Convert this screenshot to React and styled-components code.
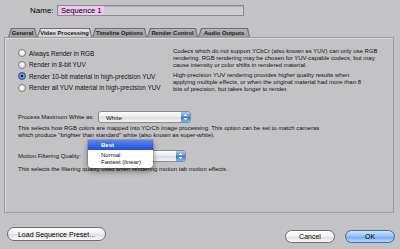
import React from "react"
import styled, { createGlobalStyle } from "styled-components"

const GlobalStyle = createGlobalStyle`
    html, body {
        margin: 0;
        padding: 0;
        background: #c3c3c5;
    }
    body {
        font-family: "Liberation Sans", Arial, sans-serif;
        color: #111;
    }
`

const tabs = ["General", "Video Processing", "Timeline Options", "Render Control", "Audio Outputs"]
const tabWidths = [29, 55, 55, 51, 52]

const radios = [
    "Always Render in RGB",
    "Render in 8-bit YUV",
    "Render 10-bit material in high-precision YUV",
    "Render all YUV material in high-precision YUV",
]

const infoLines = [
    [
        "Codecs which do not support YCbCr (also known as YUV) can only use RGB",
        "rendering. RGB rendering may be chosen for YUV-capable codecs, but may",
        "cause intensity or color shifts in rendered material.",
    ],
    [
        "High-precision YUV rendering provides higher quality results when",
        "applying multiple effects, or when the original material had more than 8",
        "bits of precision, but takes longer to render.",
    ],
]

const UpDown = () => (
    <svg width="5" height="8" viewBox="0 0 5 8">
        <path d="M0.5 3 L2.5 0.8 L4.5 3 Z M0.5 5 L2.5 7.2 L4.5 5 Z" fill="#fff" />
    </svg>
)

const App = () => {
    return (
        <Window>
            <GlobalStyle />
            <NameRow>
                <NameLabel>Name:</NameLabel>
                <NameField>
                    <Selected>Sequence 1</Selected>
                </NameField>
            </NameRow>
            <TabRow>
                {tabs.map((t, i) => (
                    <TabOuter key={t} $w={tabWidths[i]}>
                        <TabInner $active={i === 1}>{t}</TabInner>
                    </TabOuter>
                ))}
            </TabRow>
            <Panel>
                <TopSection>
                    <RadioList>
                        {radios.map((r, i) => (
                            <RadioRow key={r}>
                                <Radio $on={i === 2} />
                                <span>{r}</span>
                            </RadioRow>
                        ))}
                    </RadioList>
                    <InfoText>
                        {infoLines.map((para, i) => (
                            <p key={i}>
                                {para.map((l) => (
                                    <span key={l}>{l}</span>
                                ))}
                            </p>
                        ))}
                    </InfoText>
                </TopSection>
                <PopupRow $top={15}>
                    <FieldLabel>Process Maximum White as:</FieldLabel>
                    <Popup $w={93}>
                        <span>White</span>
                        <Arrows>
                            <UpDown />
                        </Arrows>
                    </Popup>
                </PopupRow>
                <Description>
                    <span>This selects how RGB colors are mapped into YCrCb image processing. This option can be set to match cameras</span>
                    <span>which produce "brighter than standard" white (also known as super-white).</span>
                </Description>
                <PopupRow $top={11}>
                    <FieldLabel>Motion Filtering Quality:</FieldLabel>
                    <Popup $w={88}>
                        <span></span>
                        <Arrows>
                            <UpDown />
                        </Arrows>
                        <Menu>
                            <MenuItem $active>Best</MenuItem>
                            <MenuItem>Normal</MenuItem>
                            <MenuItem>Fastest (linear)</MenuItem>
                        </Menu>
                    </Popup>
                </PopupRow>
                <Description $top={4}>
                    <span>This selects the filtering quality used when rendering motion tab motion effects.</span>
                </Description>
            </Panel>
            <Footer>
                <PillButton $w={99} $h={14} $lift={8}>Load Sequence Preset...</PillButton>
                <ButtonGroup>
                    <PillButton $w={50}>Cancel</PillButton>
                    <PillButton $w={50} $primary>OK</PillButton>
                </ButtonGroup>
            </Footer>
        </Window>
    )
}

const Window = styled.div`
    width: 400px;
    height: 249px;
    overflow: hidden;
    display: flex;
    flex-direction: column;
    background: #c3c3c5;
`
const NameRow = styled.div`
    display: flex;
    align-items: center;
    margin-top: 5px;
    padding-left: 30px;
    height: 11px;
`
const NameLabel = styled.span`
    font-size: 8px;
    width: 27px;
    color: #000;
`
const NameField = styled.div`
    width: 184px;
    height: 9px;
    border: 1px solid #8c8c8e;
    background: #cfcfd1;
    box-shadow: inset 0 1px 1px rgba(0, 0, 0, 0.15);
    display: flex;
    align-items: center;
    padding-left: 1px;
`
const Selected = styled.span`
    background: #efc6f0;
    font-size: 7.6px;
    line-height: 9px;
    padding: 0 2px;
    white-space: nowrap;
    color: #000;
`
const TabRow = styled.div`
    display: flex;
    margin-top: 12px;
    padding-left: 8px;
    height: 9px;
    gap: 1px;
`
const TabOuter = styled.div`
    width: ${(p) => p.$w}px;
    height: 9px;
    background: #707072;
    clip-path: polygon(3px 0, calc(100% - 2px) 0, 100% 100%, 0 100%);
    padding: 1px 1px 0 1px;
    box-sizing: border-box;
    margin-right: -1px;
`
const TabInner = styled.div`
    height: 100%;
    background: ${(p) =>
        p.$active ? "linear-gradient(#e2e2e4, #cdcdcf)" : "linear-gradient(#b4b4b6, #9d9d9f)"};
    clip-path: polygon(3px 0, calc(100% - 2px) 0, 100% 100%, 0 100%);
    font-size: 5.8px;
    font-weight: bold;
    color: #1a1a1a;
    display: flex;
    align-items: center;
    justify-content: center;
    white-space: nowrap;
`
const Panel = styled.div`
    margin-left: 4px;
    width: 390px;
    height: 176px;
    box-sizing: border-box;
    border: 1px solid #9c9c9e;
    box-shadow: inset 1px 1px 0 #d8d8da;
    display: flex;
    flex-direction: column;
    padding-left: 13px;
`
const TopSection = styled.div`
    display: flex;
    margin-top: 11px;
`
const RadioList = styled.div`
    display: flex;
    flex-direction: column;
    gap: 3.5px;
    width: 155px;
`
const RadioRow = styled.div`
    display: flex;
    align-items: center;
    gap: 3px;
    height: 8px;
    font-size: 6.4px;
    white-space: nowrap;
`
const Radio = styled.span`
    width: 8px;
    height: 8px;
    box-sizing: border-box;
    border-radius: 50%;
    border: 1px solid ${(p) => (p.$on ? "#2b4e8c" : "#7a7a7c")};
    background: ${(p) =>
        p.$on
            ? "radial-gradient(circle, #111 0 1.3px, #6fa3e6 1.6px, #3c72c8 100%)"
            : "radial-gradient(circle at 50% 35%, #ffffff, #dadadc)"};
    flex-shrink: 0;
`
const InfoText = styled.div`
    font-size: 6px;
    line-height: 7px;
    margin-top: -1px;
    white-space: nowrap;
    p {
        margin: 0 0 3px 0;
    }
    span {
        display: block;
    }
`
const PopupRow = styled.div`
    display: flex;
    align-items: center;
    margin-top: ${(p) => p.$top}px;
    height: 12px;
`
const FieldLabel = styled.span`
    font-size: 6px;
    width: 80px;
    white-space: nowrap;
`
const Popup = styled.div`
    position: relative;
    width: ${(p) => p.$w}px;
    height: 12px;
    box-sizing: border-box;
    border: 1px solid #8a8a8c;
    border-radius: 3px;
    background: linear-gradient(#ffffff, #e9e9eb 50%, #dcdcde 51%, #f4f4f6);
    display: flex;
    align-items: center;
    justify-content: space-between;
    font-size: 6.2px;
    padding-left: 7px;
`
const Arrows = styled.span`
    width: 9px;
    height: 10px;
    border-radius: 0 2px 2px 0;
    background: linear-gradient(#a9cdf5, #4c8fe0 50%, #2f75d6 51%, #7fb6ef);
    display: flex;
    align-items: center;
    justify-content: center;
`
const Menu = styled.div`
    position: absolute;
    left: -11px;
    top: -11px;
    width: 65px;
    padding: 0 0 2px;
    background: #ffffff;
    border-radius: 0 0 4px 4px;
    box-shadow: 0 3px 6px rgba(0, 0, 0, 0.45), 0 0 0 0.5px rgba(0, 0, 0, 0.25);
    display: flex;
    flex-direction: column;
`
const MenuItem = styled.div`
    height: ${(p) => (p.$active ? 10 : 7.5)}px;
    margin-bottom: ${(p) => (p.$active ? 1 : 0)}px;
    display: flex;
    align-items: center;
    padding-left: 13px;
    font-size: 6px;
    color: ${(p) => (p.$active ? "#fff" : "#111")};
    font-weight: ${(p) => (p.$active ? "bold" : "normal")};
    background: ${(p) => (p.$active ? "linear-gradient(#5a86f0, #1c4fd8)" : "transparent")};
`
const Description = styled.div`
    font-size: 6px;
    line-height: 7px;
    margin-top: ${(p) => p.$top || 2}px;
    white-space: nowrap;
    span {
        display: block;
    }
`
const Footer = styled.div`
    display: flex;
    justify-content: space-between;
    align-items: flex-end;
    padding: 0 5px 0 7px;
    flex: 1;
`
const ButtonGroup = styled.div`
    display: flex;
    gap: 10px;
`
const PillButton = styled.div`
    width: ${(p) => p.$w}px;
    height: ${(p) => p.$h || 13}px;
    margin-bottom: ${(p) => p.$lift || 6}px;
    box-sizing: border-box;
    border-radius: 7px;
    border: 1px solid ${(p) => (p.$primary ? "#3f6aa8" : "#6e6e70")};
    background: ${(p) =>
        p.$primary
            ? "linear-gradient(#cfe4fb, #8fbdf1 50%, #6ea8ec 51%, #b7dafc)"
            : "linear-gradient(#ffffff, #f0f0f2 50%, #dedee0 51%, #fafafc)"};
    display: flex;
    align-items: center;
    justify-content: center;
    font-size: 7px;
    color: #000;
    white-space: nowrap;
`

export default App
